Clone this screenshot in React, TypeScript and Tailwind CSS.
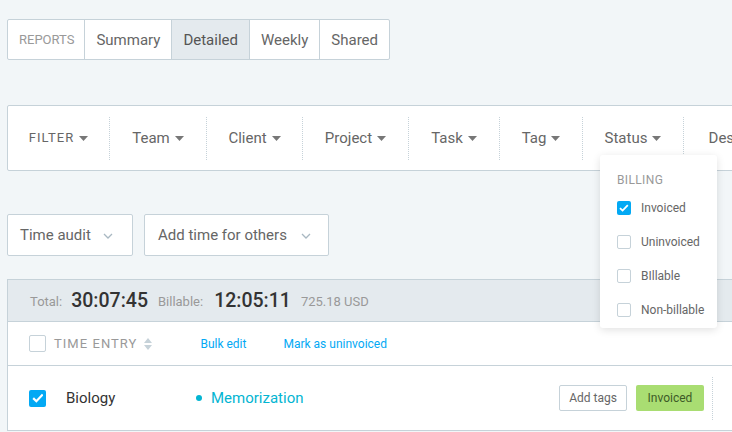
import type { ReactNode } from 'react'

const tabs = ['Summary', 'Detailed', 'Weekly', 'Shared']
const filters: [string, string][] = [
  ['Team', 'w-[97px]'],
  ['Client', 'w-[96px]'],
  ['Project', 'w-[106px]'],
  ['Task', 'w-[91px]'],
  ['Tag', 'w-[83px]'],
  ['Status', 'w-[101px]'],
  ['Description', 'w-[140px]'],
]
const billing = ['Invoiced', 'Uninvoiced', 'BIllable', 'Non-billable']

function Caret({ className = '' }: { className?: string }) {
  return (
    <svg className={className} width="9" height="5" viewBox="0 0 9 5" aria-hidden="true">
      <path d="M0 0h9L4.5 5z" fill="currentColor" />
    </svg>
  )
}

function Chevron() {
  return (
    <svg width="10" height="6" viewBox="0 0 10 6" className="text-[#a9b8c2]" aria-hidden="true">
      <path d="M1 1l4 4 4-4" fill="none" stroke="currentColor" strokeWidth="1.3" />
    </svg>
  )
}

function Checkbox({ checked, size = 'md' }: { checked?: boolean; size?: 'sm' | 'md' }) {
  const dim = size === 'sm' ? 'w-[14px] h-[14px]' : 'w-[17px] h-[17px]'
  if (checked) {
    return (
      <span className={`${dim} shrink-0 bg-[#03a9f4] rounded-[2px] flex items-center justify-center`}>
        <svg viewBox="0 0 12 10" className="w-[70%] h-[70%]" aria-hidden="true">
          <path d="M1.2 5.2l3.2 3.1L10.8 1.6" fill="none" stroke="white" strokeWidth="2.2" />
        </svg>
      </span>
    )
  }
  return <span className={`${dim} shrink-0 bg-white border border-[#c6d2d9] rounded-[2px]`} />
}

function FilterCell({ children, width, first }: { children: ReactNode; width: string; first?: boolean }) {
  return (
    <div
      className={`${width} shrink-0 flex items-center justify-center h-[43px] ${
        first ? '' : 'border-l border-dotted border-[#c6d2d9]'
      }`}
    >
      {children}
    </div>
  )
}

export default function App() {
  return (
    <div
      className="relative w-[732px] h-[432px] overflow-hidden bg-[#f2f6f8] text-[#666]"
      style={{ fontFamily: 'Roboto, "Liberation Sans", sans-serif' }}
    >
      <div className="w-[800px] pl-[7px] pt-[19px]">
        {/* report tabs */}
        <div className="flex w-fit h-[41px] bg-white border border-[#c6d2d9] rounded-[2px]">
          <div className="flex items-center pl-[11px] pr-[10px] text-[13px] uppercase text-[#999]">Reports</div>
          {tabs.map((t) => (
            <div
              key={t}
              className={`flex items-center pt-[1px] px-[11px] text-[15px] border-l border-[#c6d2d9] ${
                t === 'Detailed' ? 'bg-[#e4eaee] text-[#555]' : 'text-[#666]'
              }`}
            >
              {t}
            </div>
          ))}
        </div>

        {/* filter bar */}
        <div className="mt-[45px] h-[66px] flex items-center bg-white border border-[#c6d2d9] rounded-[2px]">
          <FilterCell first width="w-[101px]">
            <span className="text-[13px] tracking-[0.08em] uppercase text-[#666]">Filter</span>
            <Caret className="ml-[5px] text-[#777]" />
          </FilterCell>
          {filters.map(([f, w]) => (
            <FilterCell key={f} width={w}>
              <span className="text-[15px] text-[#666]">{f}</span>
              <Caret className="ml-[5px] text-[#777]" />
            </FilterCell>
          ))}
        </div>

        {/* action buttons */}
        <div className="mt-[43px] flex gap-[11px]">
          <div className="w-[126px] h-[42px] flex items-center justify-between pl-[12px] pr-[19px] pt-[1px] bg-white border border-[#c6d2d9] rounded-[2px] text-[15px] text-[#666]">
            <span>Time audit</span>
            <Chevron />
          </div>
          <div className="w-[185px] h-[42px] flex items-center justify-between pl-[13px] pr-[17px] pt-[1px] bg-white border border-[#c6d2d9] rounded-[2px] text-[15px] text-[#666]">
            <span>Add time for others</span>
            <Chevron />
          </div>
        </div>

        {/* totals */}
        <div className="mt-[23px] h-[43px] flex items-center pl-[22px] bg-[#e4eaee] border border-[#c6d2d9]">
          <span className="text-[13px] text-[#999] mt-[3px]">Total:</span>
          <span className="ml-[9px] text-[19.5px] font-medium text-[#333]">30:07:45</span>
          <span className="ml-[10px] text-[13px] text-[#999] mt-[3px]">Billable:</span>
          <span className="ml-[11px] text-[19.5px] font-medium text-[#333]">12:05:11</span>
          <span className="ml-[10px] text-[13px] text-[#999] mt-[2px]">725.18 USD</span>
        </div>

        {/* table */}
        <div className="bg-white border-x border-b border-[#c6d2d9]">
          <div className="h-[44px] flex items-center pl-[21px] border-b border-[#c6d2d9]">
            <Checkbox />
            <span className="ml-[8px] text-[13px] tracking-[0.08em] uppercase text-[#999]">Time entry</span>
            <svg width="8" height="12" viewBox="0 0 8 12" className="ml-[7px] text-[#c6d2d9]" aria-hidden="true">
              <path d="M0 5L4 0l4 5zM0 7h8l-4 5z" fill="currentColor" />
            </svg>
            <span className="ml-[48px] text-[12px] text-[#03a9f4]">Bulk edit</span>
            <span className="ml-[37px] text-[12px] text-[#03a9f4]">Mark as uninvoiced</span>
          </div>
          <div className="h-[64px] flex items-center pl-[21px]">
            <Checkbox checked />
            <span className="ml-[20px] w-[127px] text-[15px] text-[#333]">Biology</span>
            <span className="ml-[3px] w-[6px] h-[6px] rounded-full bg-[#03b5d2]" />
            <span className="ml-[9px] w-[348px] text-[15px] text-[#03b5d2]">Memorization</span>
            <div className="w-[68px] h-[26px] flex items-center justify-center bg-white border border-[#c6d2d9] rounded-[2px] text-[12px] text-[#666]">
              Add tags
            </div>
            <div className="ml-[9px] h-[26px] w-[68px] flex items-center justify-center bg-[#a9dd72] rounded-[2px] text-[12px] text-[#3d5a27]">
              Invoiced
            </div>
            <div className="ml-[8px] h-[43px] border-l border-dotted border-[#c6d2d9]" />
          </div>
        </div>
      </div>

      {/* billing dropdown */}
      <div className="absolute left-[600px] top-[155px] w-[117px] h-[173px] bg-white rounded-[3px] shadow-[0_2px_8px_rgba(0,0,0,0.12)] pl-[17px] pt-[16px]">
        <div className="text-[12px] uppercase text-[#999] tracking-[0.03em]">Billing</div>
        <div className="mt-[10px] flex flex-col gap-[17px]">
          {billing.map((b, i) => (
            <div key={b} className="flex items-center h-[17px]">
              <Checkbox checked={i === 0} size="sm" />
              <span className="ml-[10px] text-[12px] text-[#666]">{b}</span>
            </div>
          ))}
        </div>
      </div>
    </div>
  )
}
